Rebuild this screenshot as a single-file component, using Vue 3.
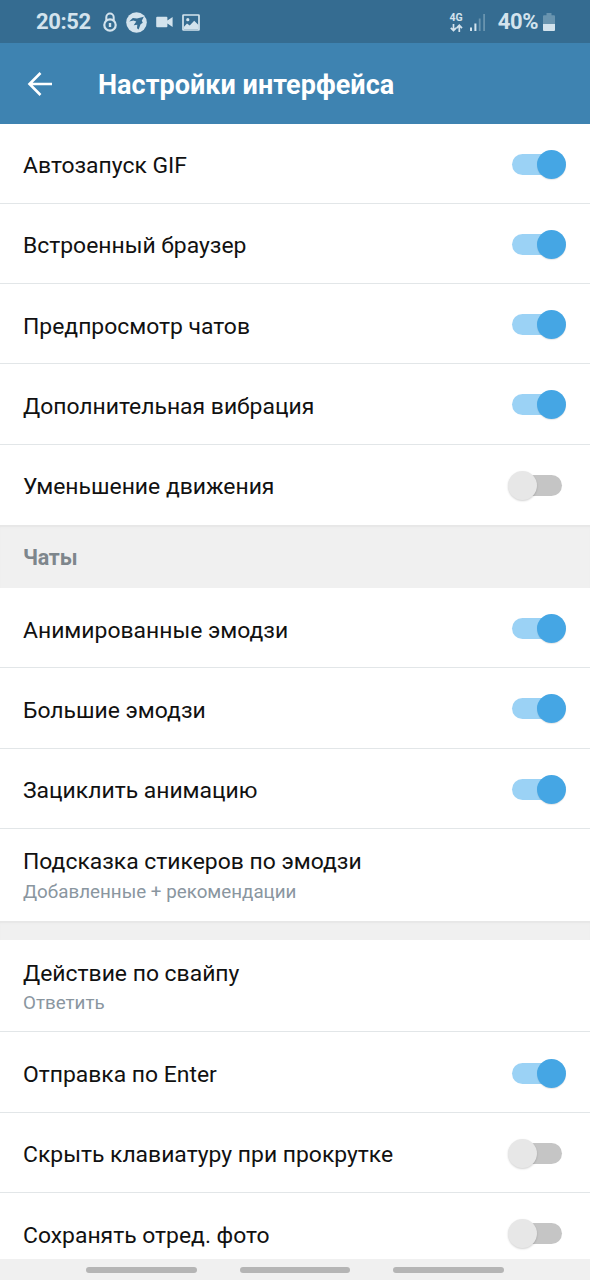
<script setup>
import { reactive } from 'vue'

const sections = reactive([
  {
    rows: [
      { label: 'Автозапуск GIF', on: true },
      { label: 'Встроенный браузер', on: true },
      { label: 'Предпросмотр чатов', on: true },
      { label: 'Дополнительная вибрация', on: true },
      { label: 'Уменьшение движения', on: false },
    ],
  },
  {
    title: 'Чаты',
    rows: [
      { label: 'Анимированные эмодзи', on: true },
      { label: 'Большие эмодзи', on: true },
      { label: 'Зациклить анимацию', on: true },
      { label: 'Подсказка стикеров по эмодзи', value: 'Добавленные + рекомендации' },
    ],
  },
  {
    rows: [
      { label: 'Действие по свайпу', value: 'Ответить' },
      { label: 'Отправка по Enter', on: true },
      { label: 'Скрыть клавиатуру при прокрутке', on: false },
      { label: 'Сохранять отред. фото', on: false },
    ],
  },
])
</script>

<template>
  <div class="screen">
    <div class="status">
      <span class="clock">20:52</span>
      <svg class="lock" width="16" height="20" viewBox="0 0 16 20" fill="none" stroke="#d3e3ed">
        <circle cx="8" cy="13" r="5.7" stroke-width="2.2" />
        <path d="M4.3 8.5V5.2a3.7 3.7 0 0 1 7.4 0v3.3" stroke-width="2" />
        <path d="M8 11v4" stroke-width="2.4" />
      </svg>
      <svg class="plane" width="21" height="21" viewBox="0 0 21 21">
        <circle cx="10.5" cy="10.5" r="10.3" fill="#d3e3ed" />
        <path d="M3.2 9.6 6.8 6l4.2.5 6.8-1.7-2 4 1 2-2.2 1.4-2 5.2-1.6-1.2.3-3.5-3.6.6 2.6-3.8-2.9-.9Z" fill="#356c91" />
      </svg>
      <svg class="video" width="17" height="12" viewBox="0 0 17 12" fill="#d3e3ed">
        <path d="M1.2.7h9.2q1 0 1 1v2.7L16.6 1v10l-5.2-3.4v2.6q0 1-1 1H1.2q-1 0-1-1V1.7q0-1 1-1Z" />
      </svg>
      <svg class="photo" width="18" height="17" viewBox="0 0 18 17">
        <rect x="1" y="1" width="16" height="15" rx=".5" fill="none" stroke="#d3e3ed" stroke-width="1.7" />
        <circle cx="5.8" cy="5.7" r="1.6" fill="#d3e3ed" />
        <path d="m2 12.8 3-3.3 2.7 2 4.5-4.7 4.3 4.1V15H2Z" fill="#d3e3ed" />
      </svg>
      <span class="spacer"></span>
      <div class="network">
        <span>4G</span>
        <svg width="13" height="8" viewBox="0 0 13 8" fill="none" stroke="#d3e3ed" stroke-width="1.7">
          <path d="M3.5 0v6.5M.8 3.8l2.7 2.8 2.7-2.8M9.3 8V1.3M6.6 4.1l2.7-2.8L12 4.1" />
        </svg>
      </div>
      <svg class="signal" width="16" height="17" viewBox="0 0 16 17">
        <path d="M0 13.5h2V17H0ZM4.4 9.5h2V17h-2Z" fill="#d3e3ed" />
        <path d="M8.8 4.5h1.8V17H8.8ZM13.2 0H15v17h-1.8Z" fill="#6994af" />
      </svg>
      <span class="percent">40%</span>
      <svg class="battery" width="12" height="18" viewBox="0 0 12 18">
        <path d="M3.5 0h5v2.3H11q1 0 1 1V11H0V3.3q0-1 1-1h2.5Z" fill="#6994af" />
        <path d="M0 11h12v6q0 1-1 1H1q-1 0-1-1Z" fill="#d3e3ed" />
      </svg>
    </div>

    <header class="bar">
      <svg width="26" height="26" viewBox="0 0 26 26" fill="none" stroke="#fff" stroke-width="2.6">
        <path d="M25 13H3M13.5 2 2.5 13l11 11" />
      </svg>
      <h1>Настройки интерфейса</h1>
    </header>

    <main class="list">
      <section v-for="(section, i) in sections" :key="i">
        <h2 v-if="section.title">{{ section.title }}</h2>
        <div v-else-if="i > 0" class="gap"></div>
        <div
          v-for="row in section.rows"
          :key="row.label"
          class="row"
          :class="{ double: row.value }"
          @click="!row.value && (row.on = !row.on)"
        >
          <div class="text">
            <div class="label">{{ row.label }}</div>
            <div v-if="row.value" class="value">{{ row.value }}</div>
          </div>
          <div v-if="!row.value" class="switch" :class="{ on: row.on }">
            <span class="knob"></span>
          </div>
        </div>
      </section>
    </main>

    <nav class="nav"><i></i><i></i><i></i></nav>
  </div>
</template>

<style>
body {
  margin: 0;
}
</style>

<style scoped>
.screen {
  display: flex;
  flex-direction: column;
  width: 590px;
  height: 1280px;
  overflow: hidden;
  background: #fff;
  font-family: Roboto, "Liberation Sans", sans-serif;
}
.status {
  display: flex;
  flex: none;
  align-items: center;
  box-sizing: border-box;
  height: 43px;
  padding: 1px 35px 0 36px;
  background: #356c91;
  color: #d3e3ed;
}
.clock,
.percent {
  font-size: 22px;
  font-weight: 700;
  letter-spacing: -0.4px;
  line-height: 42px;
}
.lock {
  margin-left: 11px;
}
.plane {
  margin-left: 8.5px;
}
.video {
  margin-left: 8.5px;
}
.photo {
  margin-left: 9.5px;
}
.spacer {
  flex: 1;
}
.network {
  display: flex;
  flex-direction: column;
  align-items: center;
  gap: 1px;
  padding-top: 1px;
  font-size: 10.5px;
  font-weight: 700;
  line-height: 10px;
}
.signal {
  margin-left: 7px;
}
.percent {
  margin-left: 12px;
}
.battery {
  margin-left: 5px;
}
.bar {
  display: flex;
  flex: none;
  align-items: center;
  box-sizing: border-box;
  height: 81px;
  padding-left: 27px;
  background: #3e83b1;
}
h1 {
  margin: 2px 0 0 45px;
  color: #fff;
  font-size: 27px;
  font-weight: 700;
  letter-spacing: 0.03px;
  line-height: 40px;
  white-space: nowrap;
}
.list {
  flex: 1;
  min-height: 0;
  margin-top: -0.5px;
  overflow: hidden;
}
.row {
  display: flex;
  justify-content: space-between;
  align-items: center;
  box-sizing: border-box;
  height: 80.3px;
  padding: 1.8px 24px 0 23px;
  border-bottom: 1px solid #e2e6e8;
}
.row:last-child {
  border-bottom-color: #fff;
}
.row.double {
  height: 92.5px;
  padding-top: 0;
}
.label {
  padding-top: 4px;
  color: #111;
  font-size: 22.9px;
  line-height: 28px;
  white-space: nowrap;
}
.value {
  padding: 3.4px 0 1px;
  color: #8a969f;
  font-size: 18.8px;
  line-height: 24px;
  white-space: nowrap;
}
.switch {
  display: flex;
  align-items: center;
  box-sizing: border-box;
  width: 50px;
  height: 21px;
  margin-right: 4.5px;
  border-radius: 11px;
  background: #c5c5c5;
}
.knob {
  flex: none;
  width: 29px;
  height: 29px;
  margin-left: -4px;
  border-radius: 50%;
  background: #e7e7e7;
  box-shadow: 0 1px 2px rgba(0, 0, 0, 0.18);
}
.switch.on {
  justify-content: flex-end;
  background: #9bd2f5;
}
.switch.on .knob {
  margin-right: -4px;
  background: #45a6e4;
  box-shadow: 0 1px 1px rgba(0, 0, 0, 0.1);
}
h2 {
  box-sizing: border-box;
  height: 63px;
  margin: 0;
  padding: 4px 0 0 23px;
  background: #f0f0f0;
  box-shadow: inset 0 3px 2px -1px #e6e6e6;
  color: #7e868c;
  font-size: 21.5px;
  font-weight: 700;
  letter-spacing: -0.2px;
  line-height: 57px;
}
.gap {
  height: 18.6px;
  background: #f0f0f0;
  box-shadow: inset 0 3px 2px -1px #e6e6e6;
}
.nav {
  display: flex;
  flex: none;
  justify-content: center;
  gap: 43px;
  box-sizing: border-box;
  height: 21px;
  padding: 8px 0 0;
  background: #f0f0f0;
}
.nav i {
  width: 110.5px;
  height: 5.5px;
  border-radius: 3px;
  background: #b5b5b5;
}
</style>
